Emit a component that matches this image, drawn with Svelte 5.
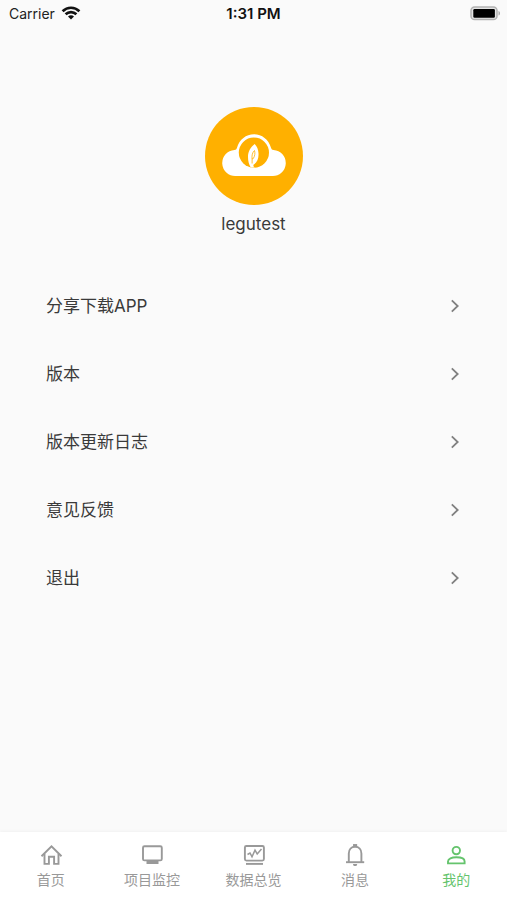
<script>
  const rows = ['分享下载APP', '版本', '版本更新日志', '意见反馈', '退出'];
  const tabs = [
    { id: 'home', label: '首页' },
    { id: 'monitor', label: '项目监控' },
    { id: 'overview', label: '数据总览' },
    { id: 'message', label: '消息' },
    { id: 'mine', label: '我的' }
  ];
  let active = $state('mine');
</script>

<div class="screen">
  <header class="status">
    <div class="carrier">
      <span>Carrier</span>
      <svg width="20" height="14" viewBox="0 0 20 14" fill="none" stroke="#111" stroke-width="2.7" aria-hidden="true">
        <path d="M1.6 5.2C6.4.6 13.6.6 18.4 5.2" />
        <path d="M4.6 8.3c3.1-3 7.7-3 10.8 0" />
        <path d="M10 13.6 7 10.5c1.7-1.6 4.3-1.6 6 0z" fill="#111" stroke="none" />
      </svg>
    </div>
    <time>1:31 PM</time>
    <div class="battery">
      <svg width="31" height="15" viewBox="0 0 31 15" aria-hidden="true">
        <rect x="1" y="1" width="26" height="12.6" rx="3.6" fill="#e4e4e4" stroke="#b2b2b2" stroke-width="1.5" />
        <rect x="3.3" y="3" width="21.6" height="8.8" rx="1.2" fill="#000" />
        <path d="M28.5 5v4.6c2-.7 2-3.9 0-4.6z" fill="#aaa" />
      </svg>
    </div>
  </header>

  <main>
    <section class="profile">
      <svg class="avatar" viewBox="0 0 98 98" aria-hidden="true">
        <circle cx="49" cy="49" r="49" fill="#ffb000" />
        <path d="M31 69a13 13 0 0 1-1.500-26c1.500-.2 1.900-.8 2.500-2.300C34.500 32.500 41 27.300 49 27.300S63.500 32.500 66 40.700c.6 1.500 1 2.100 2.500 2.300A13 13 0 0 1 67 69z" fill="#fff" />
        <circle cx="48.900" cy="45.600" r="15.100" fill="#ffb000" />
        <path d="M49.700 37c-4 2.800-6.700 7.500-6.700 13 0 4.500 1 7.500 2.800 10.500h4.400c-1.500-.5-2-1.500-1.700-2.700 3.800-2.500 5.300-6.300 5-11.500-.2-3.800-1.500-7-3.800-9.300z" fill="#fff" />
        <path d="M47.100 56.500v-4.800M47.100 52c-.4-3.500.2-6.500 2.400-8.500.8 2.500.4 5.500-1.200 8z" fill="none" stroke="#ffb000" stroke-width=".8" />
      </svg>
      <h1>legutest</h1>
    </section>

    <ul class="menu">
      {#each rows as row}
        <li>
          <button type="button">
            <span>{row}</span>
            <svg width="10" height="14" viewBox="0 0 10 14" fill="none" stroke="#808080" stroke-width="1.800" aria-hidden="true">
              <path d="m1.800 1.300 5.900 5.700-5.900 5.700" />
            </svg>
          </button>
        </li>
      {/each}
    </ul>
  </main>

  <nav>
    {#each tabs as tab}
      <button type="button" class:active={active === tab.id} onclick={() => (active = tab.id)}>
        <svg width="24" height="24" viewBox="0 0 24 24" fill="none" stroke="currentColor" stroke-width="1.9" aria-hidden="true">
          {#if tab.id === 'home'}
            <path d="M2.500 13.200 12.500 3.400l10 9.800" />
            <path d="M5.500 11v9.900h4.400v-7.200h5.200v7.200h4.400V11" />
          {:else if tab.id === 'monitor'}
            <rect x="3" y="3.200" width="18.800" height="14.200" rx="1.500" />
            <path d="M6.500 17.500h12V21h-12z" fill="currentColor" stroke="none" />
          {:else if tab.id === 'overview'}
            <rect x="2.900" y="3" width="19" height="14.600" rx="1.500" />
            <path d="M4 20.900h17" />
            <path d="m5.500 11.500 2.500-1.500 2 3.700 3-6.500 2.200 3.800 4.300-5" stroke-width="1.500" />
          {:else if tab.id === 'message'}
            <path d="M3 19.200h18.200" />
            <path d="M5.800 19v-8.600c0-4 2.500-6.700 6.300-6.700s6.300 2.700 6.300 6.700V19" />
            <path d="M11 3V2h2.200v1z" fill="currentColor" />
            <path d="M10 20.900h4.200c0 2.900-4.200 2.900-4.200 0z" fill="currentColor" stroke="none" />
          {:else}
            <circle cx="12.300" cy="7.600" r="3.700" />
            <path d="M4 20.400v-2c0-2.800 3.700-4.100 8.300-4.100s8.300 1.300 8.300 4.100v2z" />
          {/if}
        </svg>
        <span>{tab.label}</span>
      </button>
    {/each}
  </nav>
</div>

<style>
  :global(body) {
    margin: 0;
    background: #fafafa;
  }
  .screen {
    min-height: 100vh;
    display: flex;
    flex-direction: column;
    background: #fafafa;
    color: #3a3a3a;
    font-family: Inter, "Noto Sans CJK SC", sans-serif;
  }
  .status {
    display: grid;
    grid-template-columns: 1fr auto 1fr;
    align-items: center;
    height: 26px;
    padding: 0 6px;
    font-size: 14px;
    color: #222;
  }
  .carrier {
    display: flex;
    align-items: center;
    gap: 6px;
    padding-left: 3px;
  }
  .status time {
    font-size: 15px;
    font-weight: 600;
    color: #111;
  }
  .battery {
    display: flex;
    justify-content: flex-end;
  }
  main {
    flex: 1;
  }
  .profile {
    display: flex;
    flex-direction: column;
    align-items: center;
    padding-top: 81px;
  }
  .avatar {
    width: 98px;
    height: 98px;
  }
  h1 {
    margin: 7px 0 0;
    font-size: 17px;
    line-height: 24px;
    font-weight: 400;
  }
  .menu {
    list-style: none;
    margin: 36px 0 0;
    padding: 0;
  }
  button {
    border: 0;
    background: none;
    font: inherit;
    color: inherit;
    cursor: pointer;
  }
  .menu button {
    display: flex;
    align-items: center;
    justify-content: space-between;
    width: 100%;
    height: 68px;
    padding: 0 47px 0 46px;
    font-size: 17px;
    line-height: 24px;
  }
  nav {
    display: flex;
    height: 68px;
    background: #fff;
    box-shadow: 0 -1px 3px rgba(0, 0, 0, 0.04);
  }
  nav button {
    flex: 1;
    display: flex;
    flex-direction: column;
    align-items: center;
    padding: 11px 0 0;
    color: #999;
    font-size: 14px;
    line-height: 20px;
    gap: 3px;
  }
  nav button.active {
    color: #65c46d;
  }
</style>
